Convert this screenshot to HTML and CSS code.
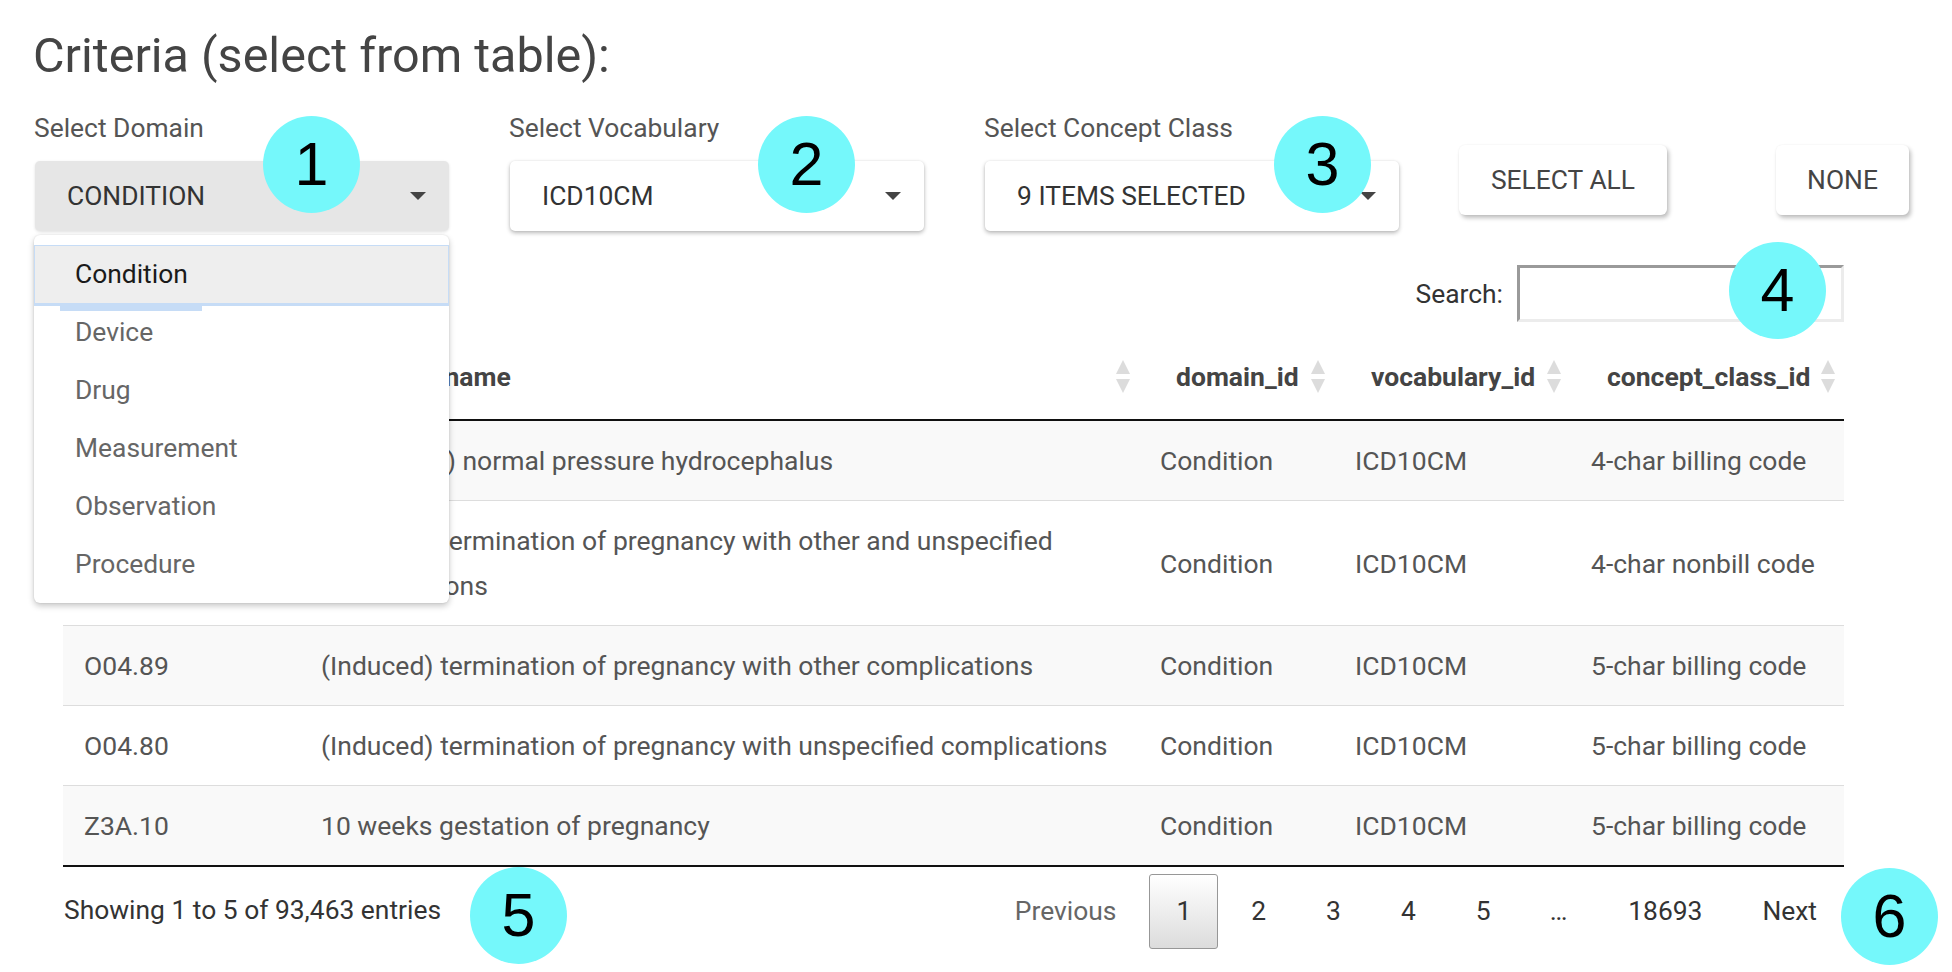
FILE: index.html
```html
<!DOCTYPE html>
<html>
<head>
<meta charset="utf-8">
<title>Criteria</title>
<link rel="stylesheet" href="styles.css">
</head>
<body>
<div class="page">
  <h1 class="title">Criteria (select from table):</h1>
  <div class="controls">
    <div class="field">
      <div class="label">Select Domain</div>
      <div class="select is-open"><span>CONDITION</span><span class="caret"></span></div>
    </div>
    <div class="field">
      <div class="label">Select Vocabulary</div>
      <div class="select"><span>ICD10CM</span><span class="caret"></span></div>
    </div>
    <div class="field field-last">
      <div class="label">Select Concept Class</div>
      <div class="select"><span>9 ITEMS SELECTED</span><span class="caret"></span></div>
    </div>
    <button class="btn btn-all">SELECT ALL</button>
    <button class="btn btn-none">NONE</button>
  </div>

  <div class="dt">
    <div class="dt-filter">
      <label class="dt-filter-label">Search:</label>
      <input class="dt-input" type="text">
    </div>
    <table class="grid">
      <colgroup>
        <col class="c1"><col class="c2"><col class="c3"><col class="c4"><col class="c5">
      </colgroup>
      <thead>
        <tr>
          <th><div class="th-in"><span>concept_code</span><svg class="sort" width="14" height="33" viewBox="0 0 14 33"><polygon points="7,0 14,14 0,14"/><polygon points="0,19 14,19 7,33"/></svg></div></th>
          <th><div class="th-in"><span>concept_name</span><svg class="sort" width="14" height="33" viewBox="0 0 14 33"><polygon points="7,0 14,14 0,14"/><polygon points="0,19 14,19 7,33"/></svg></div></th>
          <th><div class="th-in"><span>domain_id</span><svg class="sort" width="14" height="33" viewBox="0 0 14 33"><polygon points="7,0 14,14 0,14"/><polygon points="0,19 14,19 7,33"/></svg></div></th>
          <th><div class="th-in"><span>vocabulary_id</span><svg class="sort" width="14" height="33" viewBox="0 0 14 33"><polygon points="7,0 14,14 0,14"/><polygon points="0,19 14,19 7,33"/></svg></div></th>
          <th><div class="th-in"><span>concept_class_id</span><svg class="sort" width="14" height="33" viewBox="0 0 14 33"><polygon points="7,0 14,14 0,14"/><polygon points="0,19 14,19 7,33"/></svg></div></th>
        </tr>
      </thead>
      <tbody>
        <tr class="odd"><td>G91.2</td><td>(Idiopathic) normal pressure hydrocephalus</td><td>Condition</td><td>ICD10CM</td><td>4-char billing code</td></tr>
        <tr><td>O04.8</td><td>(Induced) termination of pregnancy with other and unspecified complications</td><td>Condition</td><td>ICD10CM</td><td>4-char nonbill code</td></tr>
        <tr class="odd"><td>O04.89</td><td>(Induced) termination of pregnancy with other complications</td><td>Condition</td><td>ICD10CM</td><td>5-char billing code</td></tr>
        <tr><td>O04.80</td><td>(Induced) termination of pregnancy with unspecified complications</td><td>Condition</td><td>ICD10CM</td><td>5-char billing code</td></tr>
        <tr class="odd last"><td>Z3A.10</td><td>10 weeks gestation of pregnancy</td><td>Condition</td><td>ICD10CM</td><td>5-char billing code</td></tr>
      </tbody>
    </table>
    <div class="dt-footer">
      <div class="dt-info">Showing 1 to 5 of 93,463 entries</div>
      <div class="dt-pages">
        <span class="pg pg-disabled">Previous</span>
        <span class="pg pg-current">1</span>
        <span class="pg">2</span>
        <span class="pg">3</span>
        <span class="pg">4</span>
        <span class="pg">5</span>
        <span class="pg-ellipsis">…</span>
        <span class="pg">18693</span>
        <span class="pg">Next</span>
      </div>
    </div>
  </div>

  <ul class="menu">
    <li class="menu-item is-active">Condition</li>
    <li class="menu-item">Device</li>
    <li class="menu-item">Drug</li>
    <li class="menu-item">Measurement</li>
    <li class="menu-item">Observation</li>
    <li class="menu-item">Procedure</li>
  </ul>

  <div class="badge b1">1</div>
  <div class="badge b2">2</div>
  <div class="badge b3">3</div>
  <div class="badge b4">4</div>
  <div class="badge b5">5</div>
  <div class="badge b6">6</div>
</div>
</body>
</html>
```
FILE: styles.css
```css
html, body {
  margin: 0;
  padding: 0;
  background: #ffffff;
}

body {
  font-family: Roboto, "Noto Sans", "Liberation Sans", sans-serif;
  color: #333;
}

.page {
  position: relative;
  width: 1952px;
  height: 972px;
  overflow: hidden;
  box-sizing: border-box;
  padding: 28px 0 0 35px;
}

.title {
  margin: 0 0 0 -2px;
  font-size: 48.5px;
  line-height: 56px;
  font-weight: 400;
  color: #444;
}

/* ---------- controls ---------- */
.controls {
  display: flex;
  align-items: flex-start;
  margin-top: 29px;
}

.field {
  width: 414px;
  margin-right: 61px;
}

.field-last {
  margin-right: 60px;
}

.label {
  font-size: 26.4px;
  line-height: 30px;
  color: #555;
  margin: 0 0 18px -1px;
}

.select {
  height: 70px;
  box-sizing: border-box;
  display: flex;
  align-items: center;
  justify-content: space-between;
  padding: 0 23px 0 32px;
  background: #fff;
  border-radius: 5px;
  box-shadow: 0 2px 4px rgba(0, 0, 0, 0.28), 0 0 2px rgba(0, 0, 0, 0.08);
  font-size: 26.4px;
  color: #333;
}

.select.is-open {
  background: #e6e6e6;
  box-shadow: 0 1px 3px rgba(0, 0, 0, 0.12);
}

.caret {
  width: 0;
  height: 0;
  border-left: 8px solid transparent;
  border-right: 8px solid transparent;
  border-top: 8px solid #444;
}

.btn {
  margin: 32px 0 0 0;
  height: 70px;
  box-sizing: border-box;
  border: 0;
  border-radius: 6px;
  background: #fff;
  box-shadow: 2px 3px 4px rgba(0, 0, 0, 0.25), 0 0 2px rgba(0, 0, 0, 0.06);
  font-family: Roboto, "Noto Sans", "Liberation Sans", sans-serif;
  font-size: 26.4px;
  color: #444;
  padding: 0;
}

.btn-all {
  width: 208px;
}

.btn-none {
  width: 133px;
  margin-left: 109px;
}

/* ---------- datatable ---------- */
.dt {
  margin: 34px 0 0 28px;
  width: 1781px;
}

.dt-filter {
  display: flex;
  justify-content: flex-end;
  align-items: center;
  height: 57px;
  margin-bottom: 12px;
}

.dt-filter-label {
  font-size: 26.4px;
  color: #333;
  margin-right: 14px;
}

.dt-input {
  width: 327px;
  height: 57px;
  box-sizing: border-box;
  border-style: solid;
  border-width: 3px;
  border-color: #9a9a9a #ececec #ececec #9a9a9a;
  background: #fff;
  margin: 0;
  padding: 0 8px;
  font-size: 26px;
}

.grid {
  width: 1781px;
  table-layout: fixed;
  border-collapse: separate;
  border-spacing: 0;
  font-size: 26.5px;
}

.c1 { width: 237px; }
.c2 { width: 839px; }
.c3 { width: 195px; }
.c4 { width: 236px; }
.c5 { width: 274px; }

.grid th {
  padding: 20px 9px 20px 37px;
  line-height: 45px;
  font-weight: 700;
  color: #444;
  text-align: left;
  border-bottom: 2px solid #111;
  white-space: nowrap;
}

.th-in {
  display: flex;
  align-items: center;
  justify-content: space-between;
}

.sort {
  flex: none;
  fill: #dcdcdc;
}

.grid td {
  padding: 17px 21px 17px 21px;
  line-height: 45px;
  color: #555;
  vertical-align: middle;
  border-top: 1px solid #ddd;
}

.grid tbody tr:first-child td {
  border-top: 0;
}

.grid tr.odd td {
  background: #f9f9f9;
}

.grid tr.last td {
  border-bottom: 2px solid #111;
}

.dt-footer {
  display: flex;
  justify-content: space-between;
  align-items: flex-start;
}

.dt-info {
  padding-top: 21px;
  font-size: 26.4px;
  line-height: 45px;
  color: #333;
  margin-left: 1px;
}

.dt-pages {
  display: flex;
  align-items: center;
  gap: 6px;
  padding-top: 7px;
  font-size: 26.4px;
}

.pg {
  display: block;
  padding: 14px 26px;
  line-height: 45px;
  border: 1px solid transparent;
  border-radius: 3px;
  color: #333;
}

.pg-disabled {
  color: #666;
}

.pg-current {
  border-color: #979797;
  background: linear-gradient(to bottom, #ffffff 0%, #dcdcdc 100%);
}

.pg-ellipsis {
  padding: 0 28px 0 26px;
  line-height: 45px;
  color: #333;
}

/* ---------- dropdown menu ---------- */
.menu {
  position: absolute;
  left: 34px;
  top: 235px;
  width: 415px;
  margin: 0;
  padding: 10px 0;
  list-style: none;
  background: #fff;
  border-radius: 6px;
  box-shadow: 0 3px 6px rgba(0, 0, 0, 0.22), 0 0 2px rgba(0, 0, 0, 0.12);
  box-sizing: border-box;
}

.menu-item {
  position: relative;
  height: 58px;
  line-height: 58px;
  padding-left: 41px;
  font-size: 26.4px;
  color: #666;
}

.menu-item.is-active {
  background: #eeeeee;
  color: #1a1a1a;
  box-sizing: border-box;
  line-height: 56px;
  border: 1px solid #c6dcf6;
  border-bottom: 3px solid #c6dcf6;
  padding-left: 40px;
  height: 61px;
  margin-bottom: -3px;
}

.menu-item.is-active::after {
  content: "";
  position: absolute;
  left: 25px;
  top: 100%;
  width: 142px;
  height: 5px;
  margin-top: 3px;
  background: #c6dcf6;
}

/* ---------- annotation badges ---------- */
.badge {
  position: absolute;
  width: 97px;
  height: 97px;
  border-radius: 50%;
  background: #75f8fb;
  color: #000;
  font-family: "Liberation Sans", Arial, sans-serif;
  font-size: 61px;
  line-height: 1;
  display: flex;
  align-items: center;
  justify-content: center;
}

.b1 { left: 263px; top: 116px; }
.b2 { left: 758px; top: 116px; }
.b3 { left: 1274px; top: 116px; }
.b4 { left: 1729px; top: 242px; }
.b5 { left: 470px; top: 867px; }
.b6 { left: 1841px; top: 868px; }
```
